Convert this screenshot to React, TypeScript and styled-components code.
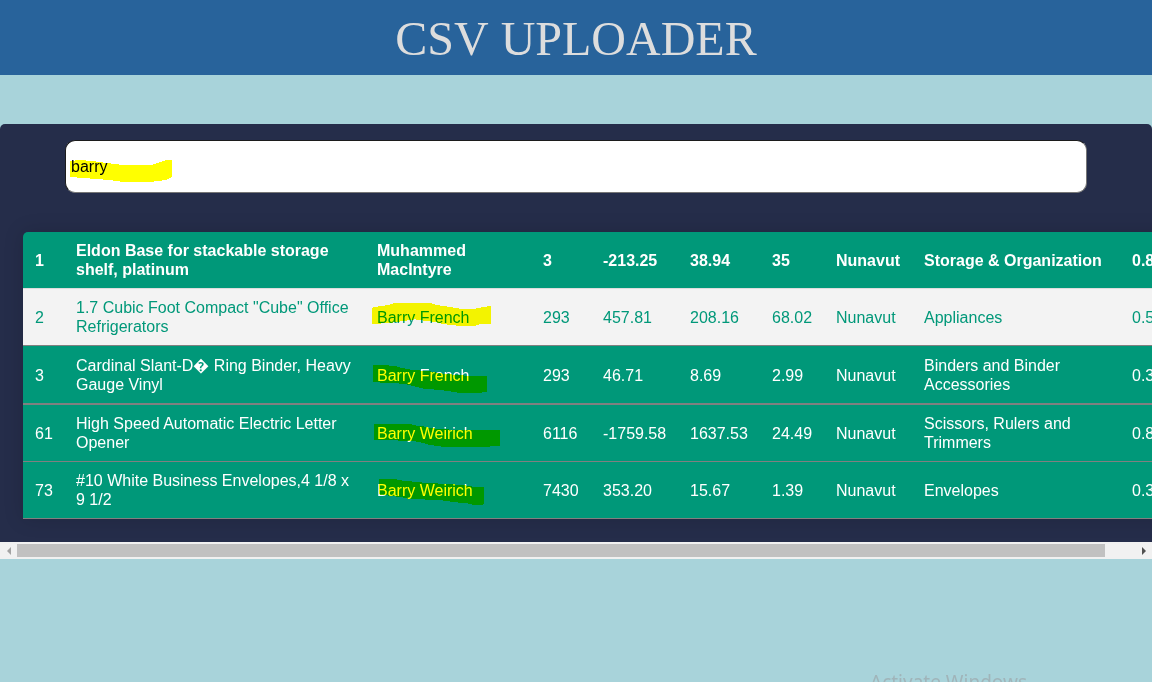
import React, { useState } from "react";
import styled, { createGlobalStyle } from "styled-components";

const GlobalStyle = createGlobalStyle`
  * { box-sizing: border-box; }
  body {
    margin: 0;
    background: #a8d3da;
    font-family: "Liberation Sans", Arial, sans-serif;
    font-size: 16px;
    overflow: hidden;
  }
`;

const Page = styled.div`
  min-height: 100vh;
`;

const Header = styled.header`
  background: #28639b;
  text-align: center;
  padding: 11px 0 9px;
`;

const Title = styled.h1`
  margin: 0;
  color: #dddddd;
  font-family: "Liberation Serif", "Times New Roman", serif;
  font-size: 48px;
  line-height: 55px;
  font-weight: 400;
  font-kerning: none;
`;

const Panel = styled.main`
  margin-top: 49px;
  background: #252d4a;
  border-radius: 5px 5px 0 0;
`;

const Scroller = styled.div`
  overflow: hidden;
  padding: 16px 0 23px;
`;

const SearchField = styled.label`
  display: block;
  position: relative;
  margin: 0 65px 39px;
`;

const SearchInput = styled.input`
  display: block;
  width: 100%;
  height: 53px;
  padding: 0 5px;
  border: 1px solid #767676;
  border-top-color: #1c1c1c;
  border-left-color: #1c1c1c;
  border-radius: 10px;
  background: #ffffff;
  color: #000000;
  font: 16px "Liberation Sans", Arial, sans-serif;
  outline: none;
`;

const Stroke = styled.svg`
  position: absolute;
  left: 0;
  top: 0;
  width: 120px;
  height: 19px;
  overflow: visible;
  mix-blend-mode: multiply;
  pointer-events: none;
`;

const TableWrap = styled.div`
  width: 1161px;
  margin-left: 23px;
  border-radius: 5px 5px 0 0;
  box-shadow: 0 0 20px rgba(0, 0, 0, 0.15);
`;

const DataTable = styled.table`
  width: 100%;
  table-layout: fixed;
  border-collapse: separate;
  border-spacing: 0;
  line-height: 19px;
  text-align: left;
`;

const HeadCell = styled.th`
  padding: 9px 12px;
  background: #009879;
  color: #ffffff;
  border-bottom: 1px solid #dddddd;

  &:first-child {
    border-top-left-radius: 5px;
  }
`;

const Row = styled.tr<{ $light?: boolean; $thick?: boolean }>`
  background: ${(p) => (p.$light ? "#f3f3f3" : "#009879")};
  color: ${(p) => (p.$light ? "#009879" : "#ffffff")};

  td {
    padding: ${(p) => (p.$thick ? "10px 12px 9px" : "9px 12px")};
    border-bottom: ${(p) => (p.$thick ? 2 : 1)}px solid #808080;
  }
`;

const Marked = styled.span`
  display: block;
  position: relative;
`;

const ScrollBar = styled.div`
  display: flex;
  align-items: center;
  height: 17px;
  background: #f1f1f1;
`;

const ScrollButton = styled.button`
  display: flex;
  align-items: center;
  justify-content: center;
  width: 17px;
  height: 17px;
  padding: 0;
  border: 0;
  background: transparent;
`;

const Track = styled.div`
  flex: 1;
`;

const Thumb = styled.div`
  width: 97.3%;
  height: 13px;
  background: #c1c1c1;
`;

const Watermark = styled.div`
  position: fixed;
  right: 125px;
  bottom: -14px;
  color: #a0b4b9;
  font-family: "Noto Sans", "Open Sans", sans-serif;
  font-size: 19px;
  line-height: 27px;
`;

interface Mark {
  viewBox: string;
  points: string;
}

interface Item {
  cells: string[];
  light?: boolean;
  thick?: boolean;
  mark: Mark;
}

const columns = [41, 301, 166, 60, 87, 82, 64, 88, 208, 64];

const head = [
  "1", "Eldon Base for stackable storage shelf, platinum", "Muhammed MacIntyre",
  "3", "-213.25", "38.94", "35", "Nunavut", "Storage & Organization", "0.8",
];

const items: Item[] = [
  {
    light: true,
    cells: ["2", "1.7 Cubic Foot Compact \"Cube\" Office Refrigerators", "Barry French", "293", "457.81", "208.16", "68.02", "Nunavut", "Appliances", "0.58"],
    mark: {
      viewBox: "51 249 360 57",
      points: "36,248 58,244 80,241 105,234 210,234 230,240 270,246 300,251 345,251 393,242 393,296 360,298 345,302 300,303 250,297 225,291 200,288 165,283 130,288 95,293 62,293 62,297 36,297",
    },
  },
  {
    thick: true,
    cells: ["3", "Cardinal Slant-D\uFFFD Ring Binder, Heavy Gauge Vinyl", "Barry French", "293", "46.71", "8.69", "2.99", "Nunavut", "Binders and Binder Accessories", "0.39"],
    mark: {
      viewBox: "51 48 360 57",
      points: "39,45 75,45 110,49 125,54 160,60 210,64 240,70 270,73 330,78 381,78 381,126 365,126 365,129 298,129 270,124 240,120 190,116 160,108 130,101 80,99 39,96",
    },
  },
  {
    cells: ["61", "High Speed Automatic Electric Letter Opener", "Barry Weirich", "6116", "-1759.58", "1637.53", "24.49", "Nunavut", "Scissors, Rulers and Trimmers", "0.82"],
    mark: {
      viewBox: "51 222 360 57",
      points: "42,222 150,222 165,226 190,229 210,234 250,238 320,240 420,240 420,288 390,288 390,291 252,291 210,285 190,279 160,273 100,271 100,269 42,269",
    },
  },
  {
    cells: ["73", "#10 White Business Envelopes,4 1/8 x 9 1/2", "Barry Weirich", "7430", "353.20", "15.67", "1.39", "Nunavut", "Envelopes", "0.38"],
    mark: {
      viewBox: "51 393 360 57",
      points: "57,387 104,387 123,391 140,393 190,398 260,402 310,405 345,411 372,411 372,462 368,465 345,465 320,460 280,456 240,450 150,447 125,442 105,439 57,433",
    },
  },
];

function Highlight({ mark }: { mark: Mark }) {
  return (
    <Stroke viewBox={mark.viewBox} aria-hidden="true">
      <polygon points={mark.points} fill="#ffff00" shapeRendering="crispEdges" />
    </Stroke>
  );
}

const searchMark: Mark = {
  viewBox: "0 0 120 19",
  points: "5,21 15,20 27,21 42,23 58,25 86,25 92,23 98,21 102,20 107,20 107,37 101,40 93,41 85,42 58,42 45,40 31,39 19,38 5,37",
};

export default function App() {
  const [query, setQuery] = useState("barry");

  return (
    <Page>
      <GlobalStyle />
      <Header>
        <Title>CSV UPLOADER</Title>
      </Header>
      <Panel>
        <Scroller>
          <SearchField>
            <SearchInput
              type="text"
              aria-label="Search"
              value={query}
              onChange={(e) => setQuery(e.target.value)}
            />
            <Highlight mark={searchMark} />
          </SearchField>
          <TableWrap>
            <DataTable>
              <colgroup>
                {columns.map((width, i) => (
                  <col key={i} width={width} />
                ))}
              </colgroup>
              <thead>
                <tr>
                  {head.map((text, i) => (
                    <HeadCell key={i} scope="col">{text}</HeadCell>
                  ))}
                </tr>
              </thead>
              <tbody>
                {items.map((item) => (
                  <Row key={item.cells[0]} $light={item.light} $thick={item.thick}>
                    {item.cells.map((text, i) => (
                      <td key={i}>
                        {i === 2 ? (
                          <Marked>
                            {text}
                            <Highlight mark={item.mark} />
                          </Marked>
                        ) : (
                          text
                        )}
                      </td>
                    ))}
                  </Row>
                ))}
              </tbody>
            </DataTable>
          </TableWrap>
        </Scroller>
        <ScrollBar>
          <ScrollButton type="button" aria-label="Scroll left">
            <svg width="4" height="8" viewBox="0 0 4 8"><path d="M4 0v8L0 4z" fill="#a3a3a3" /></svg>
          </ScrollButton>
          <Track>
            <Thumb />
          </Track>
          <ScrollButton type="button" aria-label="Scroll right">
            <svg width="4" height="8" viewBox="0 0 4 8"><path d="M0 0v8L4 4z" fill="#505050" /></svg>
          </ScrollButton>
        </ScrollBar>
      </Panel>
      <Watermark>Activate Windows</Watermark>
    </Page>
  );
}
